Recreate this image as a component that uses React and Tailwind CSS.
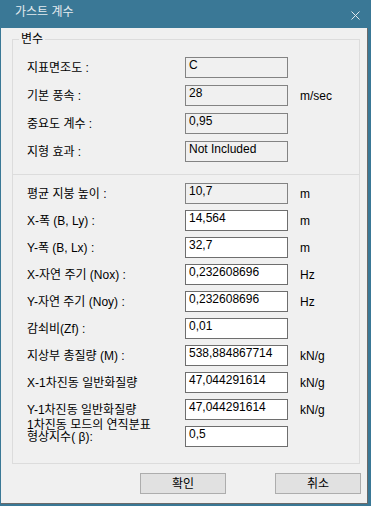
import React from "react";

const topRows = [
  { label: "지표면조도 :", value: "C" },
  { label: "기본 풍속 :", value: "28", unit: "m/sec" },
  { label: "중요도 계수 :", value: "0,95" },
  { label: "지형 효과 :", value: "Not Included" },
];

const bottomRows = [
  { label: "평균 지붕 높이 :", value: "10,7", unit: "m", readOnly: true },
  { label: "X-폭 (B, Ly) :", value: "14,564", unit: "m" },
  { label: "Y-폭 (B, Lx) :", value: "32,7", unit: "m" },
  { label: "X-자연 주기 (Nox) :", value: "0,232608696", unit: "Hz" },
  { label: "Y-자연 주기 (Noy) :", value: "0,232608696", unit: "Hz" },
  { label: "감쇠비(Zf) :", value: "0,01" },
  { label: "지상부 총질량 (M) :", value: "538,884867714", unit: "kN/g" },
  { label: "X-1차진동 일반화질량", value: "47,044291614", unit: "kN/g" },
  { label: "Y-1차진동 일반화질량", value: "47,044291614", unit: "kN/g" },
];

const Field = ({ value, readOnly }) => (
  <div
    className={`w-[103px] h-[21px] border pl-[3px] leading-[15px] whitespace-nowrap overflow-hidden ${
      readOnly ? "bg-[#f0f0f0] border-[#838383]" : "bg-white border-[#6e6e6e]"
    }`}
  >
    {value}
  </div>
);

const Row = ({ label, value, unit, readOnly }) => (
  <div className="flex items-center h-[21px] pl-[14px]">
    <div className="w-[158px] whitespace-nowrap">{label}</div>
    <Field value={value} readOnly={readOnly} />
    {unit && <div className="ml-[12px]">{unit}</div>}
  </div>
);

const GustDialog = () => {
  return (
    <div className="w-[371px] h-[506px] bg-[#3a7896] flex flex-col text-[12px] text-black font-['Liberation_Sans','Noto_Sans_CJK_KR',sans-serif]">
      {/* 타이틀 바 */}
      <div className="h-[28px] flex items-start justify-between pt-[4px] pl-[15px] pr-[11px]">
        <span className="text-[#e4ebef] leading-[16px]">가스트 계수</span>
        <svg width="9" height="9" viewBox="0 0 9 9" className="mt-[7px]">
          <path d="M0.5 0.5 L8.5 8.5 M8.5 0.5 L0.5 8.5" stroke="#dfe7ec" strokeWidth="1" />
        </svg>
      </div>

      {/* 본문 */}
      <div className="flex-1 ml-[1px] mr-[3px] mb-[2px] bg-[#f0f0f0] border-r border-b border-[#6a6a6a] flex flex-col">
        <div className="relative mt-[11px] ml-[11px] w-[348px] border border-[#dcdcdc] pt-[17px] pb-[16px]">
          <span className="absolute -top-[9px] left-[6px] px-[2px] bg-[#f0f0f0] leading-[16px]">변수</span>

          <div className="flex flex-col gap-[7px]">
            {topRows.map((r) => (
              <Row key={r.label} {...r} readOnly />
            ))}
          </div>

          <div className="mt-[12px] h-[1px] bg-[#dcdcdc]" />

          <div className="mt-[8px] flex flex-col gap-[6px]">
            {bottomRows.map((r) => (
              <Row key={r.label} {...r} />
            ))}
            <div className="flex items-start h-[21px] pl-[14px]">
              <div className="w-[158px] -mt-[7px] leading-[12px] whitespace-nowrap">
                <div>1차진동 모드의 연직분표</div>
                <div>형상지수( β):</div>
              </div>
              <Field value="0,5" />
            </div>
          </div>
        </div>

        {/* 버튼 */}
        <div className="mt-[9px] ml-[139px] flex gap-[49px]">
          <button className="w-[86px] h-[21px] bg-[#e1e1e1] border border-[#adadad] leading-[18px]">
            확인
          </button>
          <button className="w-[86px] h-[21px] bg-[#e1e1e1] border border-[#adadad] leading-[18px]">
            취소
          </button>
        </div>
      </div>
    </div>
  );
};

export default function App() {
  return <GustDialog />;
}
